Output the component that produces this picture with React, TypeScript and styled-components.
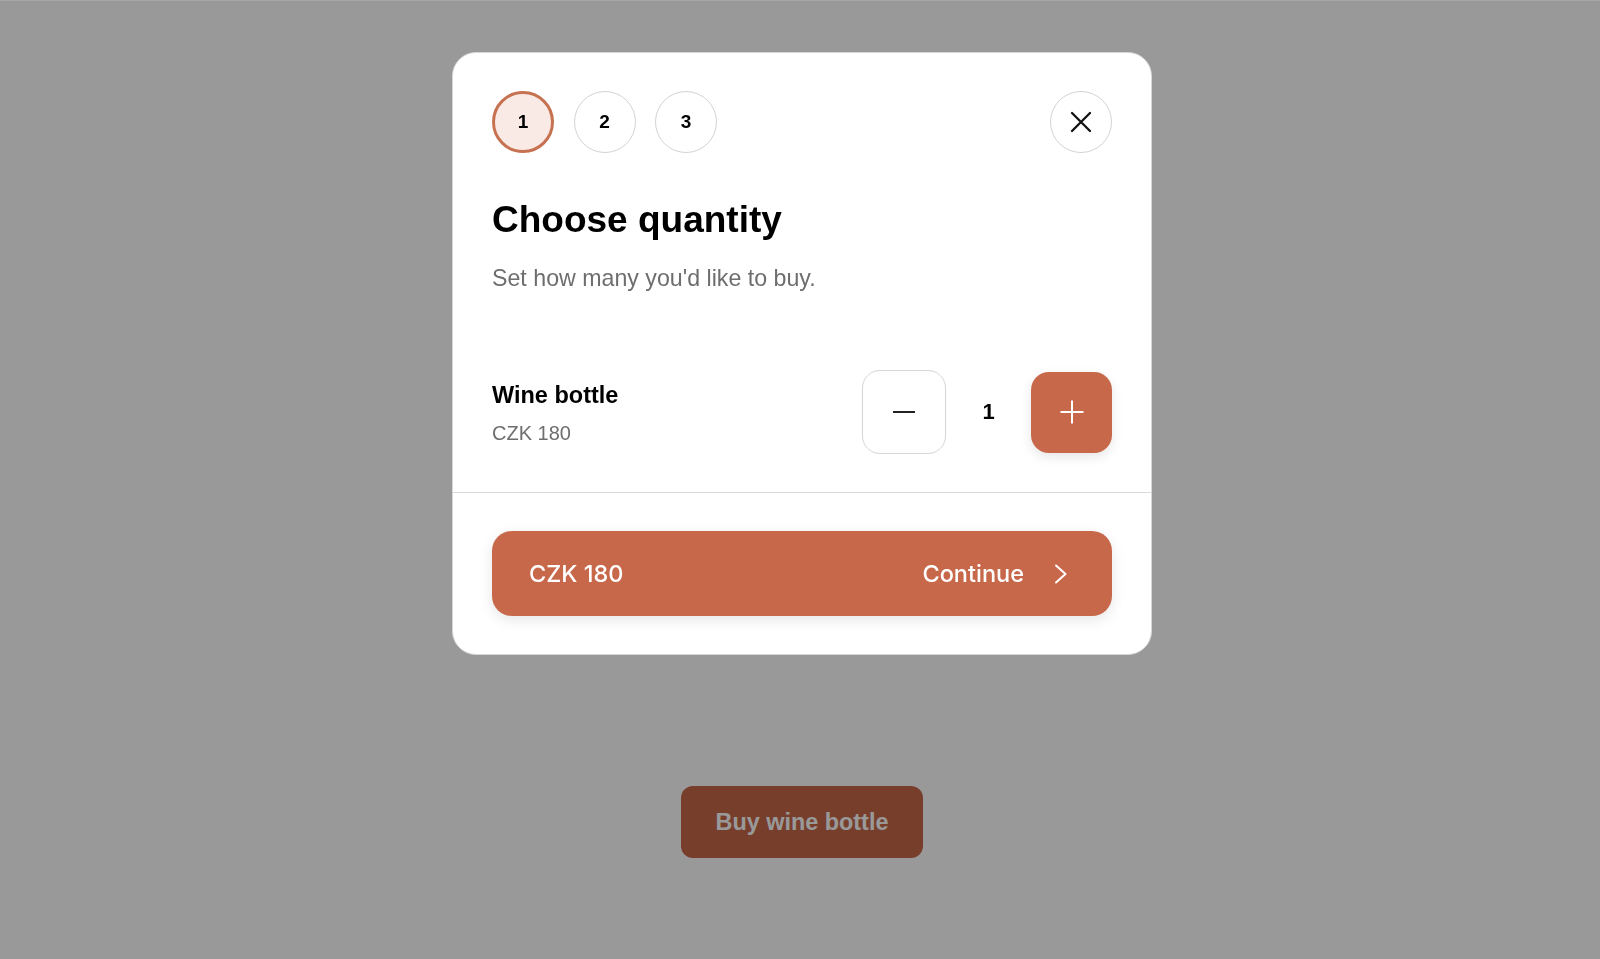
import React, { useState } from "react";
import styled, { createGlobalStyle, css } from "styled-components";

const GlobalStyle = createGlobalStyle`
  * { box-sizing: border-box; }
  html, body { margin: 0; padding: 0; background: #ffffff; }
  body { font-family: "Liberation Sans", Arial, Helvetica, sans-serif; color: #000; }
  button { font-family: inherit; }
`;

const accent = "#c8684a";

/* Page underneath the dialog */
const Page = styled.main`
  min-height: 100vh;
  display: flex;
  flex-direction: column;
  justify-content: flex-end;
  align-items: center;
  padding: 0 0 101px 4px;
`;

const BuyButton = styled.button`
  width: 242px;
  height: 72px;
  border: none;
  border-radius: 12px;
  background: ${accent};
  color: #ffffff;
  font-weight: 700;
  font-size: 23.4px;
  cursor: pointer;
`;

/* Dimmed overlay with the dialog */
const Overlay = styled.div`
  position: fixed;
  inset: 0;
  background: rgba(0, 0, 0, 0.4);
  border-top: 1px solid rgba(255, 255, 255, 0.12);
  display: flex;
  justify-content: center;
  align-items: flex-start;
  padding: 51px 0 0 4px;
`;

const Dialog = styled.div`
  width: 700px;
  background: #ffffff;
  border: 1px solid #d6d6d6;
  border-radius: 24px;
  overflow: hidden;
`;

const Body = styled.div`
  padding: 38px 39px 38px;
`;

const TopBar = styled.div`
  display: flex;
  align-items: center;
  justify-content: space-between;
`;

const Steps = styled.div`
  display: flex;
  gap: 19.5px;
`;

const Step = styled.div<{ $active?: boolean }>`
  width: 62px;
  height: 62px;
  border-radius: 50%;
  display: flex;
  align-items: center;
  justify-content: center;
  font-weight: 700;
  font-size: 19px;
  color: #000;
  ${({ $active }) =>
    $active
      ? css`
          background: #f9eae6;
          border: 3px solid #c6714f;
        `
      : css`
          background: #ffffff;
          border: 1px solid #d3d3d3;
        `}
`;

const CloseButton = styled.button`
  width: 62px;
  height: 62px;
  border-radius: 50%;
  border: 1px solid #d3d3d3;
  background: #ffffff;
  display: flex;
  align-items: center;
  justify-content: center;
  padding: 0;
  cursor: pointer;
`;

const Title = styled.h2`
  margin: 48px 0 0;
  font-size: 37px;
  line-height: 1;
  font-weight: 700;
  color: #000;
`;

const Subtitle = styled.p`
  margin: 29px 0 0;
  font-size: 23.2px;
  line-height: 1;
  color: #6e6e6e;
`;

const ItemRow = styled.div`
  margin-top: 80px;
  display: flex;
  align-items: center;
  justify-content: space-between;
`;

const ItemInfo = styled.div`
  display: flex;
  flex-direction: column;
  gap: 16px;
  padding-top: 3px;
`;

const ItemName = styled.div`
  font-size: 23.5px;
  line-height: 1;
  font-weight: 700;
  color: #000;
`;

const ItemPrice = styled.div`
  font-size: 20px;
  line-height: 1;
  color: #6e6e6e;
`;

const Stepper = styled.div`
  display: flex;
  align-items: center;
`;

const QtyButton = styled.button<{ $primary?: boolean }>`
  display: flex;
  align-items: center;
  justify-content: center;
  padding: 0;
  border-radius: 18px;
  cursor: pointer;
  ${({ $primary }) =>
    $primary
      ? css`
          width: 81px;
          height: 81px;
          border: none;
          background: ${accent};
          box-shadow: 0 4px 12px rgba(0, 0, 0, 0.1);
        `
      : css`
          width: 84px;
          height: 84px;
          border: 1px solid #d6d6d6;
          background: #ffffff;
        `}
`;

const QtyValue = styled.span`
  width: 85px;
  text-align: center;
  font-weight: 700;
  font-size: 22px;
  color: #000;
`;

const Divider = styled.hr`
  margin: 0;
  border: none;
  border-top: 1px solid #d9d9d9;
`;

const Footer = styled.div`
  padding: 38px 39px 38px;
`;

const ContinueButton = styled.button`
  width: 100%;
  height: 85px;
  border: none;
  border-radius: 20px;
  background: ${accent};
  box-shadow: 0 4px 14px rgba(0, 0, 0, 0.1);
  color: #ffffff;
  display: flex;
  align-items: center;
  justify-content: space-between;
  padding: 0 44px 0 37px;
  font-family: Inter, "Liberation Sans", sans-serif;
  font-size: 23.5px;
  font-weight: 500;
  cursor: pointer;
`;

const ContinueLabel = styled.span`
  display: flex;
  align-items: center;
  gap: 30px;
`;

const XIcon = () => (
  <svg width="22" height="22" viewBox="0 0 22 22" fill="none" stroke="#111" strokeWidth="2.3" strokeLinecap="round">
    <path d="M2 2 L20 20 M20 2 L2 20" />
  </svg>
);

const MinusIcon = () => (
  <svg width="24" height="24" viewBox="0 0 24 24" fill="none" stroke="#222" strokeWidth="2">
    <path d="M1 12 H23" />
  </svg>
);

const PlusIcon = () => (
  <svg width="24" height="24" viewBox="0 0 24 24" fill="none" stroke="#ffffff" strokeWidth="2">
    <path d="M0.5 12 H23.5 M12 0.5 V23.5" />
  </svg>
);

const ChevronIcon = () => (
  <svg width="14" height="20" viewBox="0 0 14 20" fill="none" stroke="#ffffff" strokeWidth="2" strokeLinecap="round" strokeLinejoin="round">
    <path d="M2 1.5 L11.5 10 L2 18.5" />
  </svg>
);

export default function App() {
  const [qty, setQty] = useState(1);
  const price = 180;

  return (
    <>
      <GlobalStyle />
      <Page>
        <BuyButton>Buy wine bottle</BuyButton>
      </Page>
      <Overlay>
        <Dialog role="dialog" aria-modal="true">
          <Body>
            <TopBar>
              <Steps>
                <Step $active>1</Step>
                <Step>2</Step>
                <Step>3</Step>
              </Steps>
              <CloseButton aria-label="Close">
                <XIcon />
              </CloseButton>
            </TopBar>
            <Title>Choose quantity</Title>
            <Subtitle>Set how many you'd like to buy.</Subtitle>
            <ItemRow>
              <ItemInfo>
                <ItemName>Wine bottle</ItemName>
                <ItemPrice>CZK {price}</ItemPrice>
              </ItemInfo>
              <Stepper>
                <QtyButton aria-label="Decrease" onClick={() => setQty((q) => Math.max(1, q - 1))}>
                  <MinusIcon />
                </QtyButton>
                <QtyValue>{qty}</QtyValue>
                <QtyButton $primary aria-label="Increase" onClick={() => setQty((q) => q + 1)}>
                  <PlusIcon />
                </QtyButton>
              </Stepper>
            </ItemRow>
          </Body>
          <Divider />
          <Footer>
            <ContinueButton>
              <span>CZK {price * qty}</span>
              <ContinueLabel>
                Continue
                <ChevronIcon />
              </ContinueLabel>
            </ContinueButton>
          </Footer>
        </Dialog>
      </Overlay>
    </>
  );
}
